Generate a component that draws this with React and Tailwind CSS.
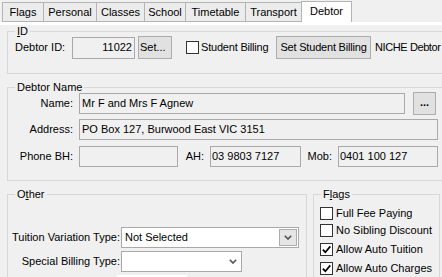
import React from "react";

const tabs = [
	{ name: "Flags", w: "w-[42px]" },
	{ name: "Personal", w: "w-[54px]" },
	{ name: "Classes", w: "w-[49px]" },
	{ name: "School", w: "w-[42px]" },
	{ name: "Timetable", w: "w-[61px]" },
	{ name: "Transport", w: "w-[57px]" },
];

function Chevron() {
	return (
		<svg width="8" height="5" viewBox="0 0 8 5">
			<polyline points="0.8,0.8 4,4 7.2,0.8" fill="none" stroke="#505050" strokeWidth="1.6" />
		</svg>
	);
}

function Check({ checked, label }) {
	return (
		<div className="flex items-center h-[13px]">
			<div className="w-[13px] h-[13px] border border-[#333333] bg-white flex items-center justify-center">
				{checked && (
					<svg width="11" height="11" viewBox="0 0 11 11">
						<path d="M1.8 5.6 L4.3 8.2 L9.3 2.4" fill="none" stroke="#000" strokeWidth="1.7" />
					</svg>
				)}
			</div>
			<span className="ml-[3px] whitespace-nowrap">{label}</span>
		</div>
	);
}

export default function App() {
	return (
		<div className="w-[442px] h-[277px] overflow-hidden bg-[#f0f0f0] text-black text-[11px] leading-[13px] font-['Liberation_Sans',Arial,sans-serif]">
			{/* TABS */}
			<div className="h-[22px] flex items-end pl-[2px]">
				{tabs.map((t, i) => (
					<div
						key={t.name}
						className={`${t.w} ${i > 0 ? "-ml-px" : ""} h-[20px] border border-[#b4b4b4] bg-[#ececec] flex items-center justify-center pt-[1px]`}
					>
						{t.name}
					</div>
				))}
				<div className="w-[51px] -ml-px h-[21px] border border-b-0 border-[#b4b4b4] bg-white flex items-center justify-center pb-[1px]">
					Debtor
				</div>
			</div>
			<div className="h-[3px] bg-white"></div>

			<div className="pl-[7px]">
				{/* ID */}
				<fieldset className="w-[460px] h-[49px] border border-[#d8d8d8]">
					<legend className="ml-[7px] px-[2px]">
						<span className="underline">I</span>D
					</legend>
					<div className="-mt-[2px] h-[23px] flex items-center pl-[7px] whitespace-nowrap">
						<span className="w-[57px]">Debtor ID:</span>
						<div className="w-[63px] h-[22px] border border-[#a9a9a9] flex items-center justify-end pr-[2px]">11022</div>
						<button className="ml-[3px] w-[34px] h-[23px] border border-[#adadad] bg-[#e1e1e1] text-left pl-[1px]">Set...</button>
						<div className="ml-[14px] w-[13px] h-[13px] border border-[#333333] bg-white"></div>
						<span className="ml-[2px] w-[75px] tracking-[-0.2px]">Student Billing</span>
						<button className="w-[95px] h-[23px] border border-[#adadad] bg-[#e1e1e1] tracking-[-0.2px]">Set Student Billing</button>
						<span className="ml-[4px] tracking-[-0.4px]">NICHE Debtor</span>
					</div>
				</fieldset>

				{/* DEBTOR NAME */}
				<fieldset className="mt-[7px] w-[460px] h-[100px] border border-[#d8d8d8]">
					<legend className="ml-[7px] px-[2px]">Debtor Name</legend>
					<div className="-mt-[1px] h-[21px] flex items-center">
						<span className="w-[65px] text-right">Name:</span>
						<div className="ml-[6px] w-[326px] h-[21px] border border-[#a9a9a9] flex items-center pl-[2px]">Mr F and Mrs F Agnew</div>
						<button className="ml-[8px] w-[23px] h-[23px] border border-[#adadad] bg-[#e1e1e1] font-bold leading-[8px] pb-[3px]">...</button>
					</div>
					<div className="mt-[5px] h-[21px] flex items-center">
						<span className="w-[65px] text-right">Address:</span>
						<div className="ml-[6px] w-[359px] h-[21px] border border-[#a9a9a9] flex items-center pl-[2px]">PO Box 127, Burwood East VIC 3151</div>
					</div>
					<div className="mt-[6px] h-[21px] flex items-center">
						<span className="w-[65px] text-right">Phone BH:</span>
						<div className="ml-[6px] w-[99px] h-[21px] border border-[#a9a9a9]"></div>
						<span className="w-[26px] text-right">AH:</span>
						<div className="ml-[6px] w-[91px] h-[21px] border border-[#a9a9a9] flex items-center pl-[1px]">03 9803 7127</div>
						<span className="w-[31px] text-right">Mob:</span>
						<div className="ml-[6px] w-[100px] h-[21px] border border-[#a9a9a9] flex items-center pl-[1px]">0401 100 127</div>
					</div>
				</fieldset>

				<div className="mt-[7px] flex items-start">
					{/* OTHER */}
					<fieldset className="w-[300px] h-[100px] border border-[#d8d8d8]">
						<legend className="ml-[7px] px-[2px]">
							O<span className="underline">t</span>her
						</legend>
						<div className="mt-[26px] flex items-center">
							<span className="w-[112px] text-right whitespace-nowrap">Tuition Variation Type:</span>
							<div className="ml-[1px] w-[178px] h-[21px] border border-[#a9a9a9] bg-white flex items-center pl-[3px]">
								<span>Not Selected</span>
								<div className="ml-auto mr-px w-[18px] h-[17px] border border-[#acacac] bg-[#e5e5e5] flex items-center justify-center">
									<Chevron />
								</div>
							</div>
						</div>
						<div className="mt-[3px] flex items-center">
							<span className="w-[112px] text-right whitespace-nowrap">Special Billing Type:</span>
							<div className="ml-[1px] w-[121px] h-[21px] border border-[#a9a9a9] bg-white flex items-center justify-end pr-[4px]">
								<Chevron />
							</div>
						</div>
						<div className="mt-[3px] ml-[109px] w-[70px] h-[20px] bg-white"></div>
					</fieldset>

					{/* FLAGS */}
					<fieldset className="ml-[6px] w-[127px] h-[100px] border border-[#d8d8d8]">
						<legend className="ml-[7px] px-[2px]">
							F<span className="underline">l</span>ags
						</legend>
						<div className="mt-[6px] ml-[6px]">
							<Check label="Full Fee Paying" />
						</div>
						<div className="mt-[4px] ml-[6px]">
							<Check label="No Sibling Discount" />
						</div>
						<div className="mt-[6px] ml-[6px]">
							<Check checked label="Allow Auto Tuition" />
						</div>
						<div className="mt-[6px] ml-[6px]">
							<Check checked label="Allow Auto Charges" />
						</div>
					</fieldset>
				</div>
			</div>
		</div>
	);
}
